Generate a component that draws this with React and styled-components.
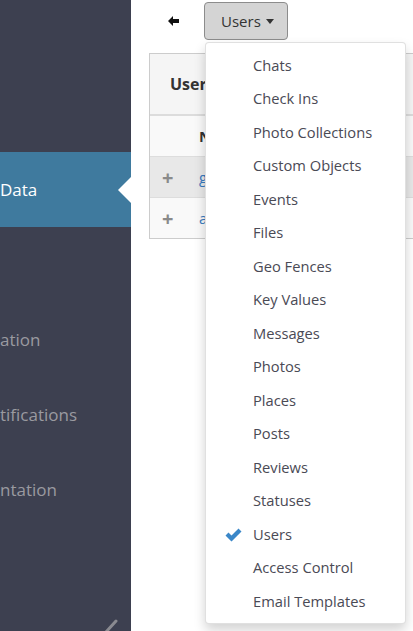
import React from 'react'
import styled, { createGlobalStyle } from 'styled-components'

const GlobalStyle = createGlobalStyle`
  html, body {
    margin: 0;
    padding: 0;
    font-family: "Open Sans", "Liberation Sans", sans-serif;
  }
  body {
    overflow: hidden;
  }
`;

const Page = styled.div`
  display: flex;
  width: 413px;
  height: 631px;
  overflow: hidden;
  background: #fff;
`;

const Sidebar = styled.nav`
  position: relative;
  width: 131px;
  flex-shrink: 0;
  background: #3d4050;
  display: flex;
  flex-direction: column;
  padding-top: 2px;
`;

const NavItem = styled.div`
  position: relative;
  height: 75px;
  display: flex;
  align-items: center;
  font-size: 17px;
  white-space: nowrap;
  color: ${props => props.active ? "#fff" : "#9a9aa0"};
  background: ${props => props.active ? "#3f7a9e" : "transparent"};
`;

const ActiveArrow = styled.span`
  position: absolute;
  right: 0;
  top: 50%;
  margin-top: -13px;
  width: 0;
  height: 0;
  border-top: 13px solid transparent;
  border-bottom: 13px solid transparent;
  border-right: 13px solid #fff;
`;

const Collapse = styled.svg`
  position: absolute;
  left: 103px;
  bottom: 0;
`;

const Main = styled.main`
  position: relative;
  flex: 1;
  overflow: hidden;
  padding-left: 18px;
`;

const Toolbar = styled.div`
  display: flex;
  align-items: center;
  height: 40px;
  padding: 1px 0 0 19px;
  box-sizing: border-box;
`;

const BackButton = styled.span`
  display: flex;
  align-items: center;
  width: 36px;
`;

const DropButton = styled.button`
  height: 38px;
  padding: 0 13px 0 16px;
  display: flex;
  align-items: center;
  gap: 5px;
  background: #d4d4d4;
  border: 1px solid #8c8c8c;
  border-radius: 4px;
  font-family: inherit;
  font-size: 15px;
  color: #333;
`;

const Caret = styled.span`
  width: 0;
  height: 0;
  margin-top: 2px;
  border-left: 4px solid transparent;
  border-right: 4px solid transparent;
  border-top: 5px solid #333;
`;

const Panel = styled.section`
  margin-top: 13px;
  width: 320px;
  border: 1px solid #ccc;
  border-right: none;
`;

const PanelHeading = styled.div`
  height: 60px;
  display: flex;
  align-items: center;
  padding-left: 20px;
  background: #f5f5f5;
  border-bottom: 2px solid #dcdcdc;
  font-size: 16px;
  font-weight: 700;
  color: #333;
`;

const Row = styled.div`
  display: flex;
  align-items: center;
  height: 40px;
  background: ${props => props.hover ? "#e8e8e8" : "#f9f9f9"};
  border-bottom: ${props => props.last ? "none" : "1px solid #ddd"};
  font-size: 15px;
`;

const PlusCell = styled.span`
  width: 49px;
  padding-left: 12px;
  box-sizing: border-box;
  font-size: 20px;
  font-weight: 700;
  color: #8a8a8a;
`;

const HeadCell = styled.span`
  font-weight: 700;
  color: #333;
`;

const LinkCell = styled.span`
  color: #3a7bbf;
`;

const Menu = styled.ul`
  position: absolute;
  top: 42px;
  left: 74px;
  width: 201px;
  margin: 0;
  padding: 5px 0;
  list-style: none;
  background: #fff;
  border: 1px solid rgba(0, 0, 0, 0.12);
  border-radius: 4px;
  box-shadow: 0 6px 12px rgba(0, 0, 0, 0.175);
  box-sizing: border-box;
`;

const MenuItem = styled.li`
  position: relative;
  height: 33.5px;
  display: flex;
  align-items: center;
  padding-left: 47px;
  font-size: 14.7px;
  color: #4a4a55;
  white-space: nowrap;
`;

const Check = styled.svg`
  position: absolute;
  left: 19px;
  top: 11px;
`;

const items = [
  "Chats", "Check Ins", "Photo Collections", "Custom Objects", "Events",
  "Files", "Geo Fences", "Key Values", "Messages", "Photos", "Places",
  "Posts", "Reviews", "Statuses", "Users", "Access Control", "Email Templates",
];

const App = () => {
  return (
    <Page>
      <GlobalStyle />
      <Sidebar>
        <NavItem />
        <NavItem />
        <NavItem active>Data<ActiveArrow /></NavItem>
        <NavItem />
        <NavItem>ation</NavItem>
        <NavItem>tifications</NavItem>
        <NavItem>ntation</NavItem>
        <Collapse width="20" height="12" viewBox="0 0 20 12">
          <line x1="3" y1="13" x2="13" y2="2" stroke="#8a8a90" strokeWidth="3" strokeLinecap="round" />
        </Collapse>
      </Sidebar>
      <Main>
        <Toolbar>
          <BackButton>
            <svg width="11" height="10" viewBox="0 0 11 10">
              <path d="M0 5 L5 0 L5 3 L11 3 L11 7 L5 7 L5 10 Z" fill="#111" />
            </svg>
          </BackButton>
          <DropButton>Users <Caret /></DropButton>
        </Toolbar>
        <Panel>
          <PanelHeading>Users</PanelHeading>
          <Row><PlusCell /><HeadCell>Name</HeadCell></Row>
          <Row hover><PlusCell>+</PlusCell><LinkCell>george</LinkCell></Row>
          <Row last><PlusCell>+</PlusCell><LinkCell>admin</LinkCell></Row>
        </Panel>
        <Menu>
          {items.map(name => (
            <MenuItem key={name}>
              {name === "Users" && (
                <Check width="17" height="14" viewBox="0 0 17 14">
                  <path d="M0.5 7.5 L3.5 4.5 L6.5 7.5 L13.5 0.5 L16.5 3.5 L6.5 13.5 Z" fill="#3a87c8" />
                </Check>
              )}
              {name}
            </MenuItem>
          ))}
        </Menu>
      </Main>
    </Page>
  )
}

export default App
